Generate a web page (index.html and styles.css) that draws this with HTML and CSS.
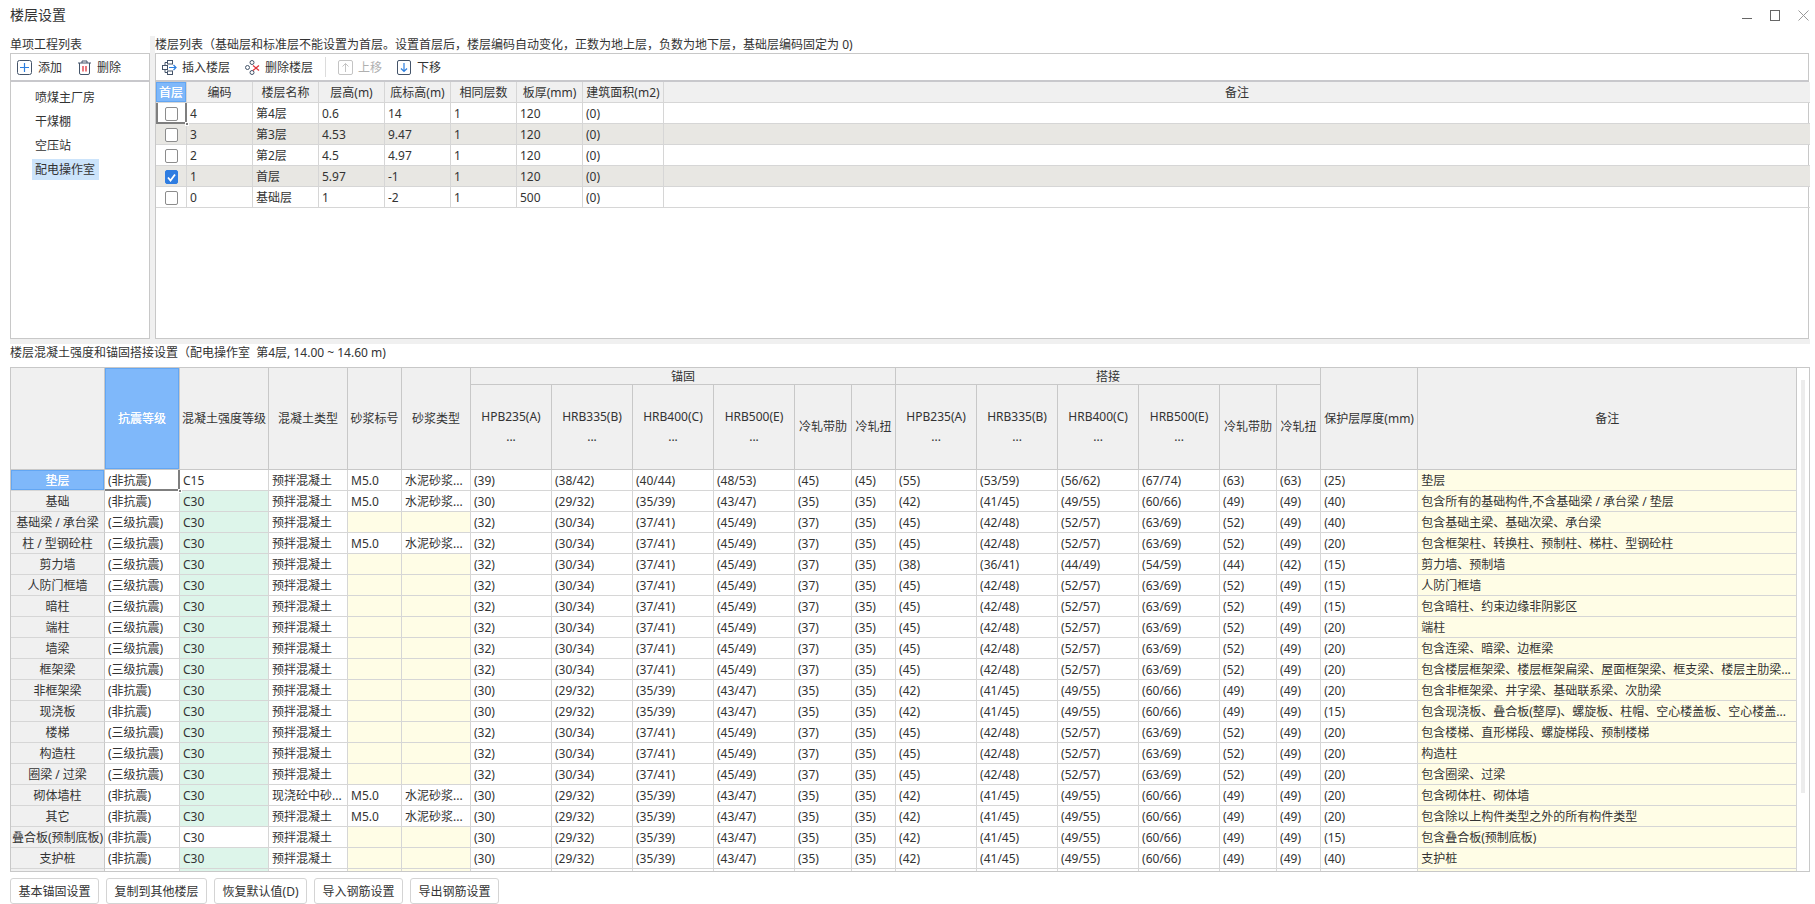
FILE: index.html
```html
<!DOCTYPE html>
<html lang="zh">
<head>
<meta charset="utf-8">
<title>楼层设置</title>
<link rel="stylesheet" href="styles.css">
</head>
<body>
<header class="titlebar">
  <h1 class="title">楼层设置</h1>
  <div class="winctl">
    <svg width="10" height="11" viewBox="0 0 10 11"><path d="M0 8.5H10" class="wi"/></svg>
    <svg width="10" height="11" viewBox="0 0 10 11"><rect x=".5" y=".5" width="9" height="10" class="wi"/></svg>
    <svg width="11" height="11" viewBox="0 0 11 11"><path d="M.5 .5L10.5 10.5M10.5 .5L.5 10.5" class="wx"/></svg>
  </div>
</header>

<main class="main">
  <section class="top">
    <div class="leftcol">
      <div class="label">单项工程列表</div>
      <div class="panel">
        <div class="toolbar">
          <span class="tool tool-add">
            <svg width="15" height="15" viewBox="0 0 15 15"><rect x=".5" y=".5" width="14" height="14" rx="2" class="dk"/><path d="M7.5 3V12M3 7.5H12" class="bl"/></svg>添加</span>
          <span class="tool tool-del">
            <svg width="15" height="15" viewBox="0 0 15 15"><path d="M1 3H14M5 3V1H10V3M2.5 3V13A1.5 1.5 0 0 0 4 14.5H11A1.5 1.5 0 0 0 12.500 13V3" class="dk"/><path d="M6 6V11.500M9 6V11.500" class="rd"/></svg>删除</span>
        </div>
        <ul class="projects">
          <li>喷煤主厂房</li>
          <li>干煤棚</li>
          <li>空压站</li>
          <li class="sel">配电操作室</li>
        </ul>
      </div>
    </div>
    <div class="rightcol">
      <div class="label">楼层列表（基础层和标准层不能设置为首层。设置首层后，楼层编码自动变化，正数为地上层，负数为地下层，基础层编码固定为 0)</div>
      <div class="panel">
        <div class="toolbar">
          <span class="tool tool-ins">
            <svg width="15" height="15" viewBox="0 0 15 15"><rect x=".5" y="5.500" width="5" height="4" class="dk"/><rect x="5.500" y=".5" width="5" height="3.500" class="dk"/><rect x="5.500" y="11" width="5" height="3.500" class="dk"/><path d="M3 5V2.500H5.500M3 10V12.500H5.500" class="dk"/><path d="M7 7.500H14M11.500 5L14 7.500L11.500 10" class="bl"/></svg>插入楼层</span>
          <span class="tool tool-rm">
            <svg width="15" height="15" viewBox="0 0 15 15"><circle cx="2.500" cy="7.500" r="2" class="dk"/><circle cx="7" cy="2.500" r="2" class="dk"/><circle cx="7" cy="12.500" r="2" class="dk"/><path d="M8 5.500L14 10.500M14 5.500L8 10.500" class="rd"/></svg>删除楼层</span>
          <span class="vsep"></span>
          <span class="tool tool-up off">
            <svg width="15" height="15" viewBox="0 0 15 15"><rect x=".5" y=".5" width="14" height="14" rx="1.500" class="lt"/><path d="M7.500 12V3.500M4.500 6.500L7.500 3.500L10.500 6.500" class="lt"/></svg>上移</span>
          <span class="tool tool-down">
            <svg width="14" height="15" viewBox="0 0 14 15"><rect x=".5" y=".5" width="13" height="14" rx="1.500" class="dk"/><path d="M7 3V11.500M4 8.500L7 11.500L10 8.500" class="bl"/></svg>下移</span>
        </div>
        <table class="floors">
          <colgroup><col class="f1"><col class="f2"><col class="f2"><col class="f2"><col class="f2"><col class="f2"><col class="f2"><col class="f3"><col class="f4"></colgroup>
          <thead>
            <tr><th class="hot">首层</th><th>编码</th><th>楼层名称</th><th>层高(m)</th><th>底标高(m)</th><th>相同层数</th><th>板厚(mm)</th><th>建筑面积(m2)</th><th>备注</th></tr>
          </thead>
          <tbody>
            <tr><td class="chk cur curl"><span class="box"></span></td><td>4</td><td>第4层</td><td>0.6</td><td>14</td><td>1</td><td>120</td><td>(0)</td><td></td></tr>
            <tr class="alt"><td class="chk"><span class="box"></span></td><td>3</td><td>第3层</td><td>4.53</td><td>9.47</td><td>1</td><td>120</td><td>(0)</td><td></td></tr>
            <tr><td class="chk"><span class="box"></span></td><td>2</td><td>第2层</td><td>4.5</td><td>4.97</td><td>1</td><td>120</td><td>(0)</td><td></td></tr>
            <tr class="alt"><td class="chk"><span class="box on"><svg width="13" height="13" viewBox="0 0 13 13"><path d="M3 6.500L5.500 9.500L10 3.500" class="ck"/></svg></span></td><td>1</td><td>首层</td><td>5.97</td><td>-1</td><td>1</td><td>120</td><td>(0)</td><td></td></tr>
            <tr><td class="chk"><span class="box"></span></td><td>0</td><td>基础层</td><td>1</td><td>-2</td><td>1</td><td>500</td><td>(0)</td><td></td></tr>
          </tbody>
        </table>
      </div>
    </div>
  </section>
  <div class="band"></div>
  <div class="seclabel">楼层混凝土强度和锚固搭接设置（配电操作室&nbsp;&nbsp;第4层, 14.00 ~ 14.60 m)</div>

  <section class="gridwrap">
    <table class="grid">
      <colgroup><col class="c0"><col class="c1"><col class="c2"><col class="c3"><col class="c4"><col class="c5"><col class="c6"><col class="c6"><col class="c6"><col class="c6"><col class="c7"><col class="c8"><col class="c6"><col class="c6"><col class="c6"><col class="c6"><col class="c7"><col class="c8"><col class="c9"><col class="c10"></colgroup>
      <thead>
        <tr class="h1">
          <th rowspan="2"></th><th rowspan="2" class="hot">抗震等级</th><th rowspan="2">混凝土强度等级</th><th rowspan="2">混凝土类型</th><th rowspan="2">砂浆标号</th><th rowspan="2">砂浆类型</th>
          <th colspan="6" class="grp">锚固</th><th colspan="6" class="grp">搭接</th>
          <th rowspan="2">保护层厚度(mm)</th><th rowspan="2">备注</th>
        </tr>
        <tr class="h2">
          <th>HPB235(A)<br>...</th><th>HRB335(B)<br>...</th><th>HRB400(C)<br>...</th><th>HRB500(E)<br>...</th><th>冷轧带肋</th><th>冷轧扭</th>
          <th>HPB235(A)<br>...</th><th>HRB335(B)<br>...</th><th>HRB400(C)<br>...</th><th>HRB500(E)<br>...</th><th>冷轧带肋</th><th>冷轧扭</th>
        </tr>
      </thead>
      <tbody>
        <tr><th class="hot">垫层</th><td class="cur">(非抗震)</td><td>C15</td><td>预拌混凝土</td><td>M5.0</td><td>水泥砂浆...</td><td>(39)</td><td>(38/42)</td><td>(40/44)</td><td>(48/53)</td><td>(45)</td><td>(45)</td><td>(55)</td><td>(53/59)</td><td>(56/62)</td><td>(67/74)</td><td>(63)</td><td>(63)</td><td>(25)</td><td class="y">垫层</td></tr>
        <tr><th>基础</th><td>(非抗震)</td><td class="g">C30</td><td>预拌混凝土</td><td>M5.0</td><td>水泥砂浆...</td><td>(30)</td><td>(29/32)</td><td>(35/39)</td><td>(43/47)</td><td>(35)</td><td>(35)</td><td>(42)</td><td>(41/45)</td><td>(49/55)</td><td>(60/66)</td><td>(49)</td><td>(49)</td><td>(40)</td><td class="y">包含所有的基础构件,不含基础梁 / 承台梁 / 垫层</td></tr>
        <tr><th>基础梁 / 承台梁</th><td>(三级抗震)</td><td class="g">C30</td><td>预拌混凝土</td><td class="y"></td><td class="y"></td><td>(32)</td><td>(30/34)</td><td>(37/41)</td><td>(45/49)</td><td>(37)</td><td>(35)</td><td>(45)</td><td>(42/48)</td><td>(52/57)</td><td>(63/69)</td><td>(52)</td><td>(49)</td><td>(40)</td><td class="y">包含基础主梁、基础次梁、承台梁</td></tr>
        <tr><th>柱 / 型钢砼柱</th><td>(三级抗震)</td><td class="g">C30</td><td>预拌混凝土</td><td>M5.0</td><td>水泥砂浆...</td><td>(32)</td><td>(30/34)</td><td>(37/41)</td><td>(45/49)</td><td>(37)</td><td>(35)</td><td>(45)</td><td>(42/48)</td><td>(52/57)</td><td>(63/69)</td><td>(52)</td><td>(49)</td><td>(20)</td><td class="y">包含框架柱、转换柱、预制柱、梯柱、型钢砼柱</td></tr>
        <tr><th>剪力墙</th><td>(三级抗震)</td><td class="g">C30</td><td>预拌混凝土</td><td class="y"></td><td class="y"></td><td>(32)</td><td>(30/34)</td><td>(37/41)</td><td>(45/49)</td><td>(37)</td><td>(35)</td><td>(38)</td><td>(36/41)</td><td>(44/49)</td><td>(54/59)</td><td>(44)</td><td>(42)</td><td>(15)</td><td class="y">剪力墙、预制墙</td></tr>
        <tr><th>人防门框墙</th><td>(三级抗震)</td><td class="g">C30</td><td>预拌混凝土</td><td class="y"></td><td class="y"></td><td>(32)</td><td>(30/34)</td><td>(37/41)</td><td>(45/49)</td><td>(37)</td><td>(35)</td><td>(45)</td><td>(42/48)</td><td>(52/57)</td><td>(63/69)</td><td>(52)</td><td>(49)</td><td>(15)</td><td class="y">人防门框墙</td></tr>
        <tr><th>暗柱</th><td>(三级抗震)</td><td class="g">C30</td><td>预拌混凝土</td><td class="y"></td><td class="y"></td><td>(32)</td><td>(30/34)</td><td>(37/41)</td><td>(45/49)</td><td>(37)</td><td>(35)</td><td>(45)</td><td>(42/48)</td><td>(52/57)</td><td>(63/69)</td><td>(52)</td><td>(49)</td><td>(15)</td><td class="y">包含暗柱、约束边缘非阴影区</td></tr>
        <tr><th>端柱</th><td>(三级抗震)</td><td class="g">C30</td><td>预拌混凝土</td><td class="y"></td><td class="y"></td><td>(32)</td><td>(30/34)</td><td>(37/41)</td><td>(45/49)</td><td>(37)</td><td>(35)</td><td>(45)</td><td>(42/48)</td><td>(52/57)</td><td>(63/69)</td><td>(52)</td><td>(49)</td><td>(20)</td><td class="y">端柱</td></tr>
        <tr><th>墙梁</th><td>(三级抗震)</td><td class="g">C30</td><td>预拌混凝土</td><td class="y"></td><td class="y"></td><td>(32)</td><td>(30/34)</td><td>(37/41)</td><td>(45/49)</td><td>(37)</td><td>(35)</td><td>(45)</td><td>(42/48)</td><td>(52/57)</td><td>(63/69)</td><td>(52)</td><td>(49)</td><td>(20)</td><td class="y">包含连梁、暗梁、边框梁</td></tr>
        <tr><th>框架梁</th><td>(三级抗震)</td><td class="g">C30</td><td>预拌混凝土</td><td class="y"></td><td class="y"></td><td>(32)</td><td>(30/34)</td><td>(37/41)</td><td>(45/49)</td><td>(37)</td><td>(35)</td><td>(45)</td><td>(42/48)</td><td>(52/57)</td><td>(63/69)</td><td>(52)</td><td>(49)</td><td>(20)</td><td class="y">包含楼层框架梁、楼层框架扁梁、屋面框架梁、框支梁、楼层主肋梁...</td></tr>
        <tr><th>非框架梁</th><td>(非抗震)</td><td class="g">C30</td><td>预拌混凝土</td><td class="y"></td><td class="y"></td><td>(30)</td><td>(29/32)</td><td>(35/39)</td><td>(43/47)</td><td>(35)</td><td>(35)</td><td>(42)</td><td>(41/45)</td><td>(49/55)</td><td>(60/66)</td><td>(49)</td><td>(49)</td><td>(20)</td><td class="y">包含非框架梁、井字梁、基础联系梁、次肋梁</td></tr>
        <tr><th>现浇板</th><td>(非抗震)</td><td class="g">C30</td><td>预拌混凝土</td><td class="y"></td><td class="y"></td><td>(30)</td><td>(29/32)</td><td>(35/39)</td><td>(43/47)</td><td>(35)</td><td>(35)</td><td>(42)</td><td>(41/45)</td><td>(49/55)</td><td>(60/66)</td><td>(49)</td><td>(49)</td><td>(15)</td><td class="y">包含现浇板、叠合板(整厚)、螺旋板、柱帽、空心楼盖板、空心楼盖...</td></tr>
        <tr><th>楼梯</th><td>(三级抗震)</td><td class="g">C30</td><td>预拌混凝土</td><td class="y"></td><td class="y"></td><td>(32)</td><td>(30/34)</td><td>(37/41)</td><td>(45/49)</td><td>(37)</td><td>(35)</td><td>(45)</td><td>(42/48)</td><td>(52/57)</td><td>(63/69)</td><td>(52)</td><td>(49)</td><td>(20)</td><td class="y">包含楼梯、直形梯段、螺旋梯段、预制楼梯</td></tr>
        <tr><th>构造柱</th><td>(三级抗震)</td><td class="g">C30</td><td>预拌混凝土</td><td class="y"></td><td class="y"></td><td>(32)</td><td>(30/34)</td><td>(37/41)</td><td>(45/49)</td><td>(37)</td><td>(35)</td><td>(45)</td><td>(42/48)</td><td>(52/57)</td><td>(63/69)</td><td>(52)</td><td>(49)</td><td>(20)</td><td class="y">构造柱</td></tr>
        <tr><th>圈梁 / 过梁</th><td>(三级抗震)</td><td class="g">C30</td><td>预拌混凝土</td><td class="y"></td><td class="y"></td><td>(32)</td><td>(30/34)</td><td>(37/41)</td><td>(45/49)</td><td>(37)</td><td>(35)</td><td>(45)</td><td>(42/48)</td><td>(52/57)</td><td>(63/69)</td><td>(52)</td><td>(49)</td><td>(20)</td><td class="y">包含圈梁、过梁</td></tr>
        <tr><th>砌体墙柱</th><td>(非抗震)</td><td class="g">C30</td><td>现浇砼中砂...</td><td>M5.0</td><td>水泥砂浆...</td><td>(30)</td><td>(29/32)</td><td>(35/39)</td><td>(43/47)</td><td>(35)</td><td>(35)</td><td>(42)</td><td>(41/45)</td><td>(49/55)</td><td>(60/66)</td><td>(49)</td><td>(49)</td><td>(20)</td><td class="y">包含砌体柱、砌体墙</td></tr>
        <tr><th>其它</th><td>(非抗震)</td><td class="g">C30</td><td>预拌混凝土</td><td>M5.0</td><td>水泥砂浆...</td><td>(30)</td><td>(29/32)</td><td>(35/39)</td><td>(43/47)</td><td>(35)</td><td>(35)</td><td>(42)</td><td>(41/45)</td><td>(49/55)</td><td>(60/66)</td><td>(49)</td><td>(49)</td><td>(20)</td><td class="y">包含除以上构件类型之外的所有构件类型</td></tr>
        <tr><th>叠合板(预制底板)</th><td>(非抗震)</td><td>C30</td><td>预拌混凝土</td><td class="y"></td><td class="y"></td><td>(30)</td><td>(29/32)</td><td>(35/39)</td><td>(43/47)</td><td>(35)</td><td>(35)</td><td>(42)</td><td>(41/45)</td><td>(49/55)</td><td>(60/66)</td><td>(49)</td><td>(49)</td><td>(15)</td><td class="y">包含叠合板(预制底板)</td></tr>
        <tr><th>支护桩</th><td>(非抗震)</td><td class="g">C30</td><td>预拌混凝土</td><td class="y"></td><td class="y"></td><td>(30)</td><td>(29/32)</td><td>(35/39)</td><td>(43/47)</td><td>(35)</td><td>(35)</td><td>(42)</td><td>(41/45)</td><td>(49/55)</td><td>(60/66)</td><td>(49)</td><td>(49)</td><td>(40)</td><td class="y">支护桩</td></tr>
        <tr><th></th><td></td><td class="g"></td><td></td><td class="y"></td><td class="y"></td><td></td><td></td><td></td><td></td><td></td><td></td><td></td><td></td><td></td><td></td><td></td><td></td><td></td><td class="y"></td></tr>
      </tbody>
    </table>
    <div class="thumb"></div>
  </section>

  <footer class="actions">
    <button class="btn">基本锚固设置</button>
    <button class="btn">复制到其他楼层</button>
    <button class="btn">恢复默认值(D)</button>
    <button class="btn">导入钢筋设置</button>
    <button class="btn">导出钢筋设置</button>
  </footer>
</main>
</body>
</html>
```

FILE: styles.css
```css
* { box-sizing: border-box; }
html, body { margin: 0; padding: 0; }
body {
  width: 1815px;
  height: 904px;
  overflow: hidden;
  background: #fff;
  color: #333;
  font-family: "Noto Sans", "Noto Sans CJK SC", sans-serif;
  font-size: 12px;
  line-height: 17px;
}

/* title bar */
.titlebar {
  height: 36px;
  display: flex;
  align-items: center;
  justify-content: space-between;
  padding: 0 6px 7px 10px;
}
.title { margin: 0; font-size: 14px; font-weight: 400; color: #333; }
.winctl { display: flex; gap: 18px; align-items: center; padding-top: 1px; }
.winctl svg { display: block; }
.wi { fill: none; stroke: #666; stroke-width: 1; }
.wx { fill: none; stroke: #999; stroke-width: 1; }

/* layout */
.main { margin-left: 10px; width: 1800px; }
.top { display: flex; height: 303px; }
.leftcol { width: 140px; display: flex; flex-direction: column; }
.rightcol {
  width: 1660px;
  display: flex;
  flex-direction: column;
  border-left: 5px solid #f0f0f0;
  padding-right: 1px;
}
.label { height: 17px; line-height: 18px; white-space: nowrap; }
.panel { flex: 1; border: 1px solid #c8c8c8; background: #fff; min-height: 0; }
.band { height: 5px; background: #f0f0f0; }
.seclabel { height: 23px; line-height: 18px; white-space: nowrap; }

/* toolbars */
.toolbar {
  height: 28px;
  display: flex;
  align-items: center;
  border-bottom: 2px solid #c8c8cc;
}
.tool { display: flex; align-items: center; gap: 5px; white-space: nowrap; }
.tool svg { display: block; flex: none; }
.off { color: #b0b0b0; }
.tool-add { margin-left: 6px; gap: 6px; }
.tool-del { margin-left: 15px; gap: 5px; }
.tool-ins { margin-left: 6px; gap: 5px; }
.tool-rm { margin-left: 15px; gap: 5px; }
.vsep { width: 1px; height: 20px; background: #dcdcdc; margin: 0 12px; }
.tool-down { margin-left: 15px; gap: 6px; }
.dk { fill: none; stroke: #44546a; stroke-width: 1; }
.bl { fill: none; stroke: #2c7fe0; stroke-width: 1.2; }
.rd { fill: none; stroke: #e0343c; stroke-width: 1.3; }
.lt { fill: none; stroke: #c4c4c4; stroke-width: 1; }
.ck { fill: none; stroke: #fff; stroke-width: 1.800; }

/* project list */
.projects { list-style: none; margin: 0; padding: 5px 0 0 21px; }
.projects li {
  width: 67px;
  height: 21px;
  margin-bottom: 3px;
  padding: 0 3px;
  line-height: 21px;
  white-space: nowrap;
}
.projects .sel { background: #cce4fb; }

/* tables */
table { border-collapse: separate; border-spacing: 0; table-layout: fixed; }
th, td {
  padding: 0 3px;
  font-weight: 400;
  white-space: nowrap;
  overflow: hidden;
  vertical-align: middle;
}
th { background: #f0f0f0; text-align: center; padding: 0; }
th.hot {
  background: #7fb8fa;
  color: #fff;
  font-weight: 400;
  text-shadow: 0 0 0.5px #fff;
  box-shadow: inset 0 0 0 1px #62a6f3;
}
.cur { position: relative; overflow: visible; }
.cur::after {
  content: "";
  position: absolute;
  inset: 0 -1px -1px 0;
  border-right: 2px solid #7f7f7f;
  border-bottom: 2px solid #7f7f7f;
}
.cur::before {
  content: "";
  position: absolute;
  right: -3px;
  bottom: -3px;
  width: 2px;
  height: 2px;
  background: #7f7f7f;
  border: 1px solid #fff;
  box-sizing: content-box;
  z-index: 1;
}
.curl::after { border-left: 2px solid #7f7f7f; }

/* floors table */
.floors { width: 1653px; }
.f1 { width: 31px; }
.f2 { width: 66px; }
.f3 { width: 81px; }
.f4 { width: 1146px; }
.floors th, .floors td {
  height: 21px;
  border-right: 1px solid #d6d6d6;
  border-bottom: 1px solid #d6d6d6;
}
.floors th:last-child, .floors td:last-child { border-right: 0; }
.alt td { background: #e8e7e3; }
.chk { text-align: center; padding: 0; }
.box {
  display: inline-block;
  width: 13px;
  height: 14px;
  vertical-align: middle;
  border: 1px solid #8c8c8c;
  border-radius: 2px;
  background: #fff;
}
.box.on { background: #2f7de1; border-color: #2f7de1; }
.box svg { display: block; margin: 0 0 0 -1px; }

/* main grid */
.gridwrap {
  position: relative;
  width: 1800px;
  height: 505px;
  border: 1px solid #c8c8c8;
  overflow: hidden;
}
.grid { width: 1786px; }
.c0 { width: 94px; }
.c1 { width: 75px; }
.c2 { width: 89px; }
.c3 { width: 79px; }
.c4 { width: 54px; }
.c5 { width: 69px; }
.c6 { width: 81px; }
.c7 { width: 57px; }
.c8 { width: 44px; }
.c9 { width: 97px; }
.c10 { width: 379px; }
.grid th, .grid td {
  border-right: 1px solid #d6d6d6;
  border-bottom: 1px solid #d6d6d6;
}
.grid thead th { border-color: #c8c8c8; line-height: 20px; }
.grid thead .grp { height: 17px; line-height: 15px; }
.grid tbody th { border-right-color: #c8c8c8; border-bottom-color: #d6d6d6; }
.grid tbody th, .grid tbody td { height: 21px; }
.h1 { height: 17px; }
.h2 { height: 85px; }
.g { background: #ddf5ea; }
.y { background: #fffde6; }
.thumb {
  position: absolute;
  left: 1790px;
  top: 12px;
  width: 4px;
  height: 413px;
  background: #ececec;
}

/* actions */
.actions { display: flex; gap: 7px; margin-top: 6px; }
.btn {
  height: 26px;
  padding: 0 7.5px;
  margin: 0;
  border: 1px solid #d4d4d4;
  border-radius: 3px;
  background: #fff;
  color: #333;
  font: inherit;
  white-space: nowrap;
}
```
